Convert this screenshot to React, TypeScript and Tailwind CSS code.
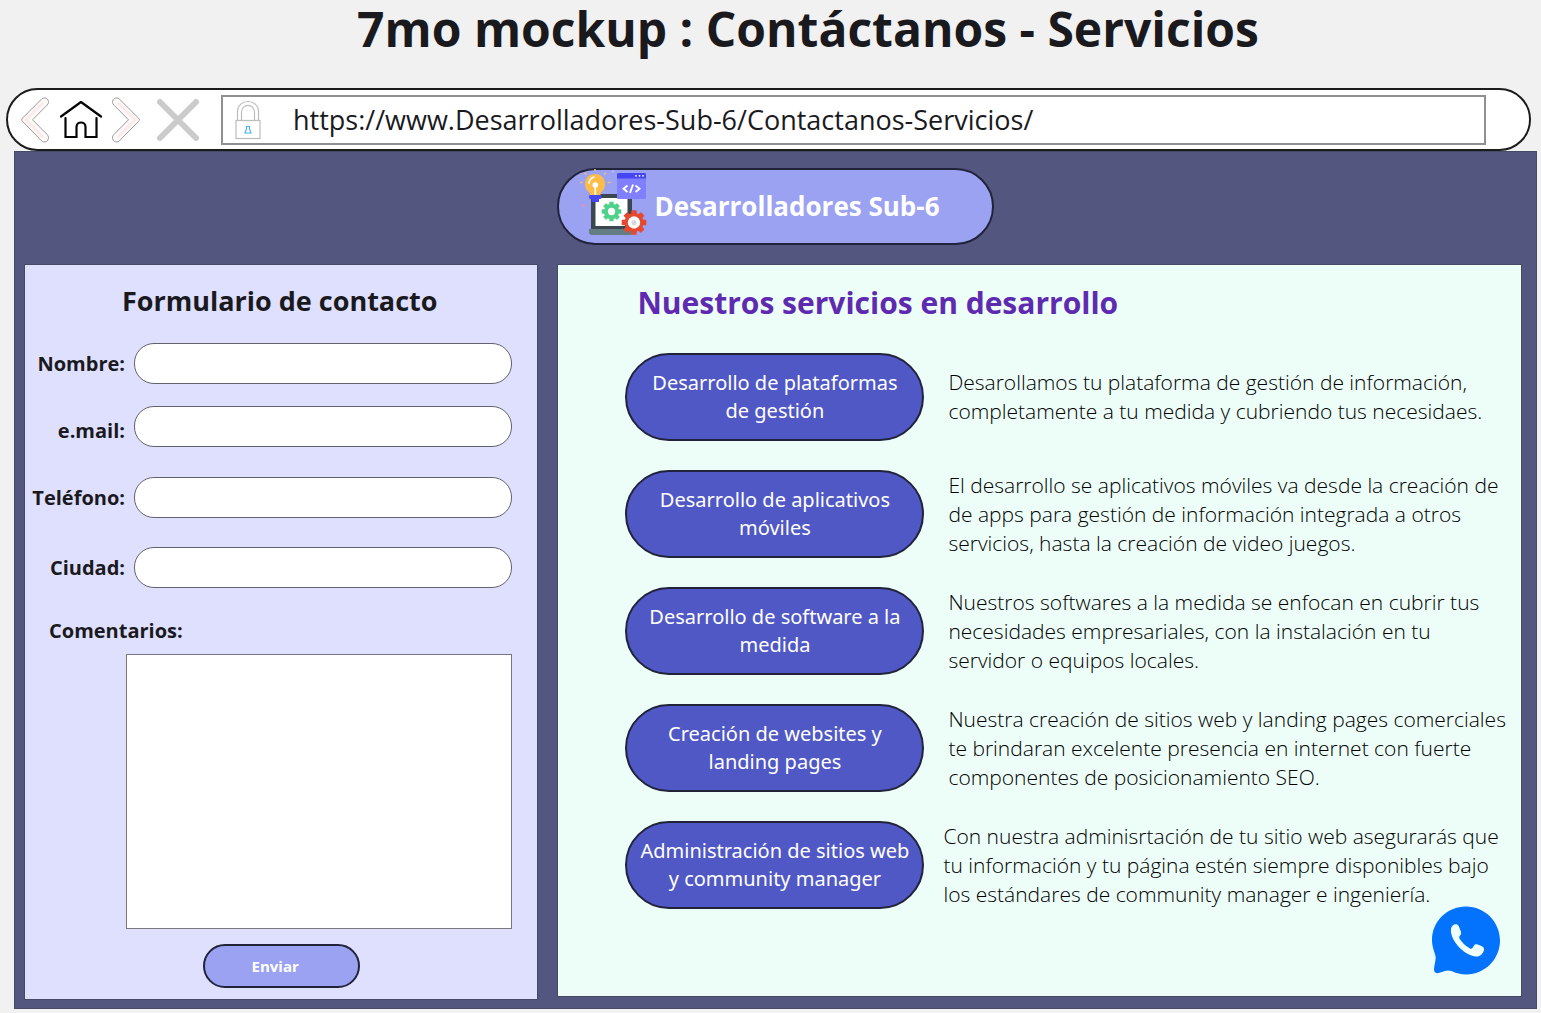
import React from "react";

type Service = { name: string; description: string; wide?: boolean };

const services: Service[] = [
  {
    name: "Desarrollo de plataformas\nde gestión",
    description:
      "Desarollamos tu plataforma de gestión de información,\ncompletamente a tu medida y cubriendo tus necesidaes.",
  },
  {
    name: "Desarrollo de aplicativos\nmóviles",
    description:
      "El desarrollo se aplicativos móviles va desde la creación de\nde apps para gestión de información integrada a otros\nservicios, hasta la creación de video juegos.",
  },
  {
    name: "Desarrollo de software a la\nmedida",
    description:
      "Nuestros softwares a la medida se enfocan en cubrir tus\nnecesidades empresariales, con la instalación en tu\nservidor o equipos locales.",
  },
  {
    name: "Creación de websites y\nlanding pages",
    description:
      "Nuestra creación de sitios web y landing pages comerciales\nte brindaran excelente presencia en internet con fuerte\ncomponentes de posicionamiento SEO.",
  },
  {
    name: "Administración de sitios web\ny community manager",
    description:
      "Con nuestra adminisrtación de tu sitio web asegurarás que\ntu información y tu página estén siempre disponibles bajo\nlos estándares de community manager e ingeniería.",
    wide: true,
  },
];

function Chevron({ flip = false }: { flip?: boolean }) {
  return (
    <svg viewBox="0 0 28 46" className={flip ? "h-[46px] w-7 -scale-x-100" : "h-[46px] w-7"} aria-hidden="true">
      <path
        d="M20.500 2.200C22.500 .3 25.500 .6 26.800 2.700C28 4.600 27.600 6.600 26 8.200L11.500 22.800L26 37.400C27.600 39 28 41.200 26.800 43.200C25.500 45.300 22.500 45.600 20.500 43.800L1.300 24.200C.4 23.300 .4 22.200 1.300 21.300Z"
        fill="#fffafa"
      />
      <path d="M22.500 5.500L5 22.800L22.500 40.500" fill="none" stroke="#fdebea" strokeWidth="3" />
      <path
        d="M20.500 2.200C22.500 .3 25.500 .6 26.800 2.700C28 4.600 27.600 6.600 26 8.200L11.500 22.800L26 37.400C27.600 39 28 41.200 26.800 43.200C25.500 45.300 22.500 45.600 20.500 43.800L1.300 24.200C.4 23.300 .4 22.200 1.300 21.300Z"
        fill="none"
        stroke="#9a989d"
        strokeWidth="1"
      />
    </svg>
  );
}

function HomeIcon() {
  return (
    <svg viewBox="0 0 44 40" className="h-10 w-11" fill="none" stroke="#050505" strokeWidth="2.200" strokeLinecap="round" aria-hidden="true">
      <path d="M2 16.500L22 2L42 16.500" strokeLinejoin="round" />
      <path d="M6.500 18V37H17.500V27C17.500 21 26.500 21 26.500 27V37H37.500V18" />
    </svg>
  );
}

function CloseIcon() {
  return (
    <svg viewBox="0 0 44 44" className="size-11" stroke="#cbcbcb" strokeWidth="6" strokeLinecap="round" aria-hidden="true">
      <path d="M4 4L40 40M40 4L4 40" />
    </svg>
  );
}

function LockIcon() {
  return (
    <svg viewBox="0 0 26 40" className="h-10 w-[26px]" fill="none" stroke="#bcbcbc" strokeWidth="1.200" aria-hidden="true">
      <path d="M2.500 20V12C2.500 -2 23.500 -2 23.500 12V20M6.500 20V12.500C6.500 3 19.500 3 19.500 12.500V20" />
      <rect x="1" y="20.500" width="24" height="18" fill="#fff" />
      <path d="M11.500 26.500H14.500V29L16 33H10L11.500 29Z" stroke="#52b0f7" />
    </svg>
  );
}

function Gear({ x, y, size, color, children }: { x: number; y: number; size: number; color: string; children?: React.ReactNode }) {
  const angles = [0, 45, 90, 135, 180, 225, 270, 315];
  return (
    <g transform={`translate(${x} ${y}) scale(${size})`}>
      {angles.map((angle) => (
        <rect key={angle} x="-2.200" y="-10" width="4.400" height="5" rx=".6" fill={color} transform={`rotate(${angle})`} />
      ))}
      <circle r="7.800" fill={color} />
      {children}
    </g>
  );
}

function BrandLogo() {
  return (
    <svg viewBox="0 0 70 68" className="mb-2 h-[68px] w-[70px] shrink-0" aria-hidden="true">
      <rect x="11" y="25" width="41" height="38" rx="3" fill="#3a474e" />
      <rect x="15.500" y="29" width="32" height="28" fill="#fff" />
      <path d="M9 60H53V63Q53 66 50 66H12Q9 66 9 63Z" fill="#647d85" />
      <Gear x={31.500} y={42.500} size={0.98} color="#4fd18b">
        <circle r="3.700" fill="#fff" />
      </Gear>
      <rect x="37" y="4" width="29" height="26" rx="1.500" fill="#8080ff" />
      <path d="M37 9.500V5.500Q37 4 38.500 4H64.500Q66 4 66 5.500V9.500Z" fill="#4646f5" />
      <g fill="#fff">
        <circle cx="56" cy="6.800" r=".9" />
        <circle cx="59.500" cy="6.800" r=".9" />
        <circle cx="63" cy="6.800" r=".9" />
      </g>
      <path d="M47.500 16.500L43.500 19.700L47.500 23M55.500 16.500L59.500 19.700L55.500 23M53 15.500L50 24" fill="none" stroke="#fff" strokeWidth="1.900" />
      <g stroke="#edb986" strokeWidth="1.500" strokeLinecap="round">
        <path d="M15 0V1.500M5 4L6 5.500M25.500 4L24.500 5.500M0 13.500H2M28 13.500H30" />
      </g>
      <path d="M33 1V4M31.500 2.500H34.500" stroke="#b7b8ff" strokeWidth="1.200" />
      <path d="M10 27V24Q4.500 20 5 14C6 2 24 2 25 14Q25.500 20 20.500 24V27Z" fill="#fdbc48" />
      <path d="M9 14Q10 9 14 8" fill="none" stroke="#fff" strokeWidth="1.600" strokeLinecap="round" />
      <circle cx="15.300" cy="16" r="2.800" fill="#fff" />
      <path d="M15.300 17V26" stroke="#fff" strokeWidth="1.600" />
      <path d="M9.500 26H20.500Q21.500 26 21.500 28V29Q21.500 30 20 30H19V33H12V30H10.500Q9 30 9 28Z" fill="#4646f5" />
      <circle cx="3.500" cy="36.500" r="1.600" fill="#d994c6" />
      <Gear x={54} y={53.500} size={1.230} color="#e6492f">
        <circle r="5" fill="#fff" />
        <circle r="2.100" fill="#d9d9dc" />
      </Gear>
    </svg>
  );
}

function ChatPhoneIcon() {
  return (
    <svg viewBox="0 0 70 70" className="size-[70px]" aria-hidden="true">
      <path
        d="M36 1.500C17 1.500 2 16.500 2 35C2 42 4.500 47 5.500 51C6.200 54 4.500 59 4 64C3.600 67.500 6.500 69 9.500 67.800C14 66.500 17 64.500 21.500 66C26 68 31 69.500 36 69.500C55 69.500 70 54 70 35.500C70 17 55 1.500 36 1.500Z"
        fill="#0373fd"
      />
      <path
        d="M21 24C21.500 20.500 24.500 18.500 27.200 19.600Q28.800 20.500 29.500 23L31 27Q31.800 29 30 30.500Q28.500 31.800 29.500 33.500Q33 39.500 40 43.500Q41.500 44.300 42.500 43L44 40.500Q45 38.700 47 39.300L52 41.200Q54.500 42.400 54 44.500C53.500 48.500 50 52 45.500 51.500C33 50 19.500 34 21 24Z"
        fill="#effffb"
      />
    </svg>
  );
}

function Field({ id, label, type = "text", className }: { id: string; label: string; type?: string; className: string }) {
  return (
    <div className={`flex gap-[9px] ${className}`}>
      <label htmlFor={id} className="w-[100px] shrink-0 text-right text-[20px] leading-8 font-bold">
        {label}
      </label>
      <input
        id={id}
        type={type}
        className="h-[41px] min-w-0 flex-1 rounded-[20px] border border-[#62626e] bg-white px-5 text-lg outline-none focus:ring-2 focus:ring-[#5058c6]"
      />
    </div>
  );
}

function ContactForm() {
  return (
    <form
      onSubmit={(event) => event.preventDefault()}
      className="flex flex-col border border-[#464a67] bg-[#dfe0fe] pr-[25px] pb-[11px]"
    >
      <h2 className="mt-4 pl-[22px] text-center text-[27px] leading-10 font-bold">Formulario de contacto</h2>
      <Field id="nombre" label="Nombre:" className="mt-[22px] items-center" />
      <Field id="email" label="e.mail:" type="email" className="mt-[22px] items-end" />
      <Field id="telefono" label="Teléfono:" type="tel" className="mt-[30px] items-center" />
      <Field id="ciudad" label="Ciudad:" className="mt-[29px] items-center" />
      <label htmlFor="comentarios" className="mt-[29px] ml-6 text-[20px] leading-7 font-bold">
        Comentarios:
      </label>
      <textarea
        id="comentarios"
        className="mt-[9px] ml-[101px] h-[275px] resize-none border border-[#77777f] bg-white p-3 text-lg outline-none focus:ring-2 focus:ring-[#5058c6]"
      />
      <button
        type="submit"
        className="mt-[15px] ml-[25px] h-11 w-[157px] self-center rounded-[22px] border-2 border-[#20233a] bg-[#9ca2f2] pr-3 text-[15px] font-bold text-white"
      >
        Enviar
      </button>
    </form>
  );
}

function Services() {
  return (
    <section className="relative mb-[3px] flex flex-col border border-[#464a67] bg-[#edfdf8] pl-[67px]">
      <h2 className="mt-4 ml-3 text-[30px] leading-[44px] font-bold text-[#5e2bb0]">Nuestros servicios en desarrollo</h2>
      <ul className="mt-7 flex flex-col gap-[29px]">
        {services.map((service) => (
          <li key={service.name} className={service.wide ? "flex items-center gap-[19px]" : "flex items-center gap-6"}>
            <button
              type="button"
              className="h-[88px] w-[299px] shrink-0 rounded-[44px] border-2 border-[#20233a] bg-[#5058c6] font-['Noto_Sans',sans-serif] text-[20px] leading-7 whitespace-pre text-white"
            >
              {service.name}
            </button>
            <p className="text-[21px] leading-[29px] font-light whitespace-pre text-black">{service.description}</p>
          </li>
        ))}
      </ul>
      <button type="button" aria-label="Llamar por chat" className="absolute right-[21px] bottom-[21px]">
        <ChatPhoneIcon />
      </button>
    </section>
  );
}

export default function App() {
  return (
    <div className="min-h-screen bg-[#f1f1f1] pb-1 font-['Open_Sans',sans-serif] text-[#1a1a1e]">
      <h1 className="mb-[31px] pl-[75px] text-center text-[48px] leading-[57px] font-bold">
        7mo mockup : Contáctanos - Servicios
      </h1>
      <nav className="mr-[10px] ml-[6px] flex h-[63px] items-center rounded-[32px] border-2 border-[#1c1c1c] bg-white pl-[13px]" aria-label="Navegador">
        <button type="button" aria-label="Atrás">
          <Chevron />
        </button>
        <button type="button" aria-label="Inicio" className="ml-[10px]">
          <HomeIcon />
        </button>
        <button type="button" aria-label="Adelante" className="ml-[9px]">
          <Chevron flip />
        </button>
        <button type="button" aria-label="Detener" className="ml-4">
          <CloseIcon />
        </button>
        <div className="mr-[43px] ml-[21px] flex h-[50px] min-w-0 flex-1 items-center border-2 border-[#909090] pl-3">
          <LockIcon />
          <input
            type="text"
            aria-label="Dirección"
            defaultValue="https://www.Desarrolladores-Sub-6/Contactanos-Servicios/"
            className="ml-8 min-w-0 flex-1 bg-transparent text-[27px] leading-9 outline-none"
          />
        </div>
      </nav>
      <main className="mr-1 ml-[14px] border border-[#464a67] bg-[#53567e] pt-4 pr-[14px] pb-2 pl-[9px]">
        <header className="flex justify-center pl-1">
          <div className="flex h-[77px] w-[437px] items-center rounded-[39px] border-2 border-[#20233a] bg-[#9ca2f2] pl-[21px]">
            <BrandLogo />
            <p className="ml-[5px] text-[26px] font-bold whitespace-nowrap text-white">Desarrolladores Sub-6</p>
          </div>
        </header>
        <div className="mt-[19px] grid grid-cols-[8fr_15fr] gap-[19px]">
          <ContactForm />
          <Services />
        </div>
      </main>
    </div>
  );
}
